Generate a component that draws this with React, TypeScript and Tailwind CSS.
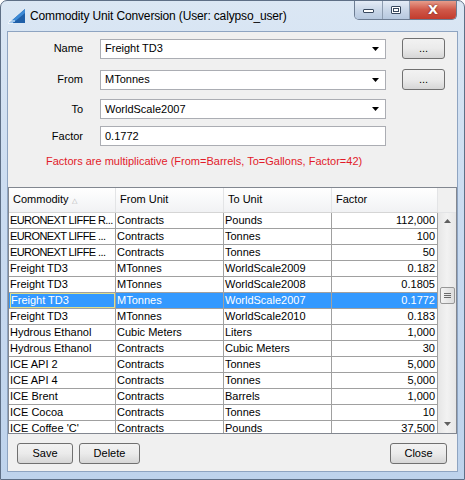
import React from "react";

const ROWS: [string, string, string, string][] = [
  ["EURONEXT LIFFE R...", "Contracts", "Pounds", "112,000"],
  ["EURONEXT LIFFE ...", "Contracts", "Tonnes", "100"],
  ["EURONEXT LIFFE ...", "Contracts", "Tonnes", "50"],
  ["Freight TD3", "MTonnes", "WorldScale2009", "0.182"],
  ["Freight TD3", "MTonnes", "WorldScale2008", "0.1805"],
  ["Freight TD3", "MTonnes", "WorldScale2007", "0.1772"],
  ["Freight TD3", "MTonnes", "WorldScale2010", "0.183"],
  ["Hydrous Ethanol", "Cubic Meters", "Liters", "1,000"],
  ["Hydrous Ethanol", "Contracts", "Cubic Meters", "30"],
  ["ICE API 2", "Contracts", "Tonnes", "5,000"],
  ["ICE API 4", "Contracts", "Tonnes", "5,000"],
  ["ICE Brent", "Contracts", "Barrels", "1,000"],
  ["ICE Cocoa", "Contracts", "Tonnes", "10"],
  ["ICE Coffee 'C'", "Contracts", "Pounds", "37,500"],
];

const SELECTED = 5;

function Combo({ value }: { value: string }) {
  return (
    <div className="flex h-[20px] w-[286px] items-center border border-[#abadb3] bg-white pl-[4px]">
      <span className="flex-1">{value}</span>
      <svg viewBox="0 0 7 4" className="mr-[6px] h-[4px] w-[7px]">
        <path d="M0 0h7L3.5 4z" fill="#000" />
      </svg>
    </div>
  );
}

function Button({ label, w }: { label: string; w: string }) {
  return (
    <div
      className={`flex h-[21px] ${w} items-center justify-center rounded-[3px] border border-[#707070] bg-gradient-to-b from-[#f2f2f2] via-[#ebebeb] to-[#d6d6d6] text-black`}
    >
      {label}
    </div>
  );
}

function Row({ label, children }: { label: string; children: React.ReactNode }) {
  return (
    <div className="flex items-center">
      <div className="w-[76px] pr-[1px] text-right">{label}</div>
      <div className="ml-[16px]">{children}</div>
    </div>
  );
}

function AppIcon() {
  return (
    <svg viewBox="0 0 18 16" className="h-[16px] w-[18px]">
      <path d="M1 15L17 1v14z" fill="#1f5fa8" />
      <path d="M1 15L17 1v4L5 15z" fill="#3d8ad6" />
      <path d="M1 13h6M0 15h5" stroke="#ffffff" strokeWidth="1" />
    </svg>
  );
}

export default function App() {
  return (
    <div
      className="flex h-[480px] w-[465px] flex-col overflow-hidden rounded-t-[7px] border border-[#5e6f86] bg-gradient-to-b from-[#dbe7f4] via-[#c8daf0] to-[#bed3ec] text-[11px] text-black"
      style={{ fontFamily: '"Liberation Sans", Arial, sans-serif' }}
    >
      {/* Title bar */}
      <div className="relative flex h-[30px] shrink-0 items-center pl-[7px]">
        <AppIcon />
        <span className="ml-[4px] text-[12px] tracking-[-0.15px] text-black">
          Commodity Unit Conversion (User: calypso_user)
        </span>
        <div className="absolute right-[7px] top-[-1px] flex h-[20px] overflow-hidden rounded-b-[5px] border border-t-0 border-[#6d7d93]">
          <div className="flex w-[28px] items-center justify-center border-r border-[#8d9cb0] bg-gradient-to-b from-[#e7eef8] via-[#cbd8e9] to-[#b6c8df]">
            <div className="mt-[3px] h-[4px] w-[11px] rounded-[1px] border border-[#38485e] bg-white" />
          </div>
          <div className="flex w-[27px] items-center justify-center border-r border-[#8d9cb0] bg-gradient-to-b from-[#e7eef8] via-[#cbd8e9] to-[#b6c8df]">
            <div className="h-[8px] w-[10px] rounded-[1px] border border-[#38485e] bg-white p-[1px]">
              <div className="h-full w-full border border-[#38485e]" />
            </div>
          </div>
          <div className="flex w-[46px] items-center justify-center bg-gradient-to-b from-[#e8a493] via-[#d0594a] to-[#c23b2d]">
            <span
              className="text-[13px] font-bold leading-none text-white"
              style={{ fontFamily: '"DejaVu Sans", sans-serif', textShadow: "0 0 2px #5a1a10" }}
            >
              X
            </span>
          </div>
        </div>
      </div>

      {/* Client area */}
      <div className="mx-[6px] flex flex-1 flex-col border border-[#8ea4c1] bg-[#f0f0f0]">
        <div className="flex flex-col pt-[6px]">
          <Row label="Name">
            <div className="flex items-center gap-[16px]">
              <Combo value="Freight TD3" />
              <Button label="..." w="w-[43px]" />
            </div>
          </Row>
          <div className="mt-[10px]">
            <Row label="From">
              <div className="flex items-center gap-[16px]">
                <Combo value="MTonnes" />
                <Button label="..." w="w-[43px]" />
              </div>
            </Row>
          </div>
          <div className="mt-[9px]">
            <Row label="To">
              <Combo value="WorldScale2007" />
            </Row>
          </div>
          <div className="mt-[7px]">
            <Row label="Factor">
              <div className="flex h-[20px] w-[286px] items-center border border-[#abadb3] bg-white pl-[4px]">
                0.1772
              </div>
            </Row>
          </div>
          <div className="ml-[38px] mt-[7px] text-[#e21b2a]">
            Factors are multiplicative (From=Barrels, To=Gallons, Factor=42)
          </div>
        </div>

        {/* Table */}
        <div className="mt-[17px] flex h-[247px] border border-[#828790] bg-white">
          <div className="flex w-[429px] flex-col">
            <div className="flex h-[25px] shrink-0 border-b border-[#d5d5d5] bg-gradient-to-b from-[#ffffff] to-[#f1f2f4]">
              <div className="flex w-[107px] items-center border-r border-[#e3e4e6] pl-[4px]">
                Commodity
                <span className="ml-[3px] mt-[3px] text-[7px] text-[#b0b0b0]">&#9651;</span>
              </div>
              <div className="flex w-[108px] items-center border-r border-[#e3e4e6] pl-[4px]">From Unit</div>
              <div className="flex w-[108px] items-center border-r border-[#e3e4e6] pl-[4px]">To Unit</div>
              <div className="flex w-[106px] items-center border-r border-[#e3e4e6] pl-[4px]">Factor</div>
            </div>
            <div className="flex-1 overflow-hidden">
              {ROWS.map((r, i) => {
                const sel = i === SELECTED;
                const caps = r[0].startsWith("EURONEXT");
                const cell = `flex h-[16px] items-center overflow-hidden whitespace-nowrap border-b border-r border-[#a0a0a0] ${sel ? "bg-[#3399ff] text-white" : ""}`;
                return (
                  <div key={i} className="flex">
                    <div className={`${cell} w-[107px] pl-[1px]`}>
                      <span
                        className={`flex h-full w-full items-center ${caps ? "tracking-[-0.6px]" : ""} ${sel ? "border border-[#dede8c]" : ""}`}
                      >
                        {r[0]}
                      </span>
                    </div>
                    <div className={`${cell} w-[108px] pl-[1px]`}>{r[1]}</div>
                    <div className={`${cell} w-[108px] pl-[1px]`}>{r[2]}</div>
                    <div className={`${cell} w-[106px] justify-end pr-[2px]`}>{r[3]}</div>
                  </div>
                );
              })}
            </div>
          </div>
          {/* Scrollbar */}
          <div className="flex w-[18px] flex-col bg-[#f0f0f0]">
            <div className="h-[25px] border-b border-[#e3e4e6] bg-[#f0f0f0]" />
            <div className="flex flex-1 flex-col items-center bg-gradient-to-r from-[#e6e6e6] via-[#f2f2f2] to-[#e6e6e6]">
              <div className="flex h-[17px] w-full items-center justify-center">
                <svg viewBox="0 0 7 4" className="h-[4px] w-[7px]">
                  <path d="M0 4h7L3.5 0z" fill="#606060" />
                </svg>
              </div>
              <div className="mt-[57px] flex h-[17px] w-[15px] flex-col items-center justify-center gap-[1px] rounded-[2px] border border-[#979797] bg-gradient-to-r from-[#f4f4f4] to-[#dcdcdc]">
                <div className="h-[1px] w-[7px] bg-[#6a6a6a]" />
                <div className="h-[1px] w-[7px] bg-[#6a6a6a]" />
                <div className="h-[1px] w-[7px] bg-[#6a6a6a]" />
              </div>
              <div className="flex-1" />
              <div className="flex h-[17px] w-full items-center justify-center">
                <svg viewBox="0 0 7 4" className="h-[4px] w-[7px]">
                  <path d="M0 0h7L3.5 4z" fill="#606060" />
                </svg>
              </div>
            </div>
          </div>
        </div>

        {/* Buttons */}
        <div className="flex items-center px-[9px] pt-[9px]">
          <Button label="Save" w="w-[56px]" />
          <div className="ml-[6px]">
            <Button label="Delete" w="w-[61px]" />
          </div>
          <div className="flex-1" />
          <div className="mr-[1px]">
            <Button label="Close" w="w-[57px]" />
          </div>
        </div>
      </div>
      <div className="h-[7px] shrink-0" />
    </div>
  );
}
